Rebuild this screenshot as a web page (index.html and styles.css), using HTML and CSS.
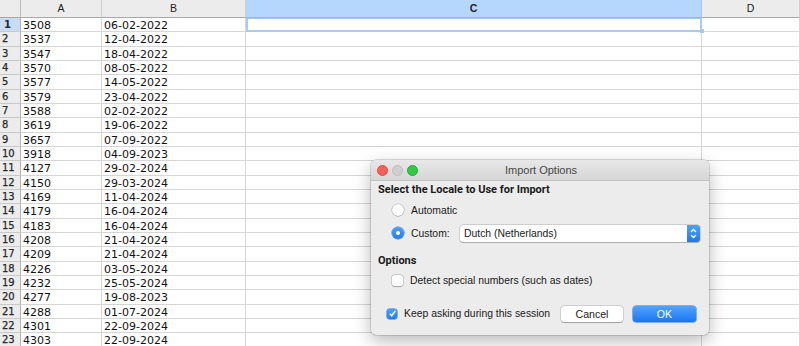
FILE: index.html
```html
<!DOCTYPE html>
<html>
<head>
<meta charset="utf-8">
<link rel="stylesheet" href="styles.css">
</head>
<body>
<div class="sheet">
  <div class="ch corner"></div>
  <div class="ch">A</div>
  <div class="ch">B</div>
  <div class="ch sel">C</div>
  <div class="ch">D</div>

  <div class="rh cur">1</div><div class="c">3508</div><div class="c">06-02-2022</div><div class="c active"><span class="handle"></span></div><div class="c"></div>
  <div class="rh">2</div><div class="c">3537</div><div class="c">12-04-2022</div><div class="c"></div><div class="c"></div>
  <div class="rh">3</div><div class="c">3547</div><div class="c">18-04-2022</div><div class="c"></div><div class="c"></div>
  <div class="rh">4</div><div class="c">3570</div><div class="c">08-05-2022</div><div class="c"></div><div class="c"></div>
  <div class="rh">5</div><div class="c">3577</div><div class="c">14-05-2022</div><div class="c"></div><div class="c"></div>
  <div class="rh">6</div><div class="c">3579</div><div class="c">23-04-2022</div><div class="c"></div><div class="c"></div>
  <div class="rh">7</div><div class="c">3588</div><div class="c">02-02-2022</div><div class="c"></div><div class="c"></div>
  <div class="rh">8</div><div class="c">3619</div><div class="c">19-06-2022</div><div class="c"></div><div class="c"></div>
  <div class="rh">9</div><div class="c">3657</div><div class="c">07-09-2022</div><div class="c"></div><div class="c"></div>
  <div class="rh">10</div><div class="c">3918</div><div class="c">04-09-2023</div><div class="c"></div><div class="c"></div>
  <div class="rh">11</div><div class="c">4127</div><div class="c">29-02-2024</div><div class="c"></div><div class="c"></div>
  <div class="rh">12</div><div class="c">4150</div><div class="c">29-03-2024</div><div class="c"></div><div class="c"></div>
  <div class="rh">13</div><div class="c">4169</div><div class="c">11-04-2024</div><div class="c"></div><div class="c"></div>
  <div class="rh">14</div><div class="c">4179</div><div class="c">16-04-2024</div><div class="c"></div><div class="c"></div>
  <div class="rh">15</div><div class="c">4183</div><div class="c">16-04-2024</div><div class="c"></div><div class="c"></div>
  <div class="rh">16</div><div class="c">4208</div><div class="c">21-04-2024</div><div class="c"></div><div class="c"></div>
  <div class="rh">17</div><div class="c">4209</div><div class="c">21-04-2024</div><div class="c"></div><div class="c"></div>
  <div class="rh">18</div><div class="c">4226</div><div class="c">03-05-2024</div><div class="c"></div><div class="c"></div>
  <div class="rh">19</div><div class="c">4232</div><div class="c">25-05-2024</div><div class="c"></div><div class="c"></div>
  <div class="rh">20</div><div class="c">4277</div><div class="c">19-08-2023</div><div class="c"></div><div class="c"></div>
  <div class="rh">21</div><div class="c">4288</div><div class="c">01-07-2024</div><div class="c"></div><div class="c"></div>
  <div class="rh">22</div><div class="c">4301</div><div class="c">22-09-2024</div><div class="c"></div><div class="c"></div>
  <div class="rh">23</div><div class="c">4303</div><div class="c">22-09-2024</div><div class="c"></div><div class="c"></div>
</div>

<div class="dialog">
  <div class="titlebar">
    <div class="lights">
      <span class="light red"></span>
      <span class="light gray"></span>
      <span class="light green"></span>
    </div>
    <div class="title">Import Options</div>
  </div>
  <div class="body">
    <div class="heading">Select the Locale to Use for Import</div>
    <div class="opt">
      <span class="radio"></span>
      <span class="label">Automatic</span>
    </div>
    <div class="opt custom">
      <span class="radio on"></span>
      <span class="label lw">Custom:</span>
      <div class="select">
        <span class="val">Dutch (Netherlands)</span>
        <span class="stepper">
          <svg width="7" height="11" viewBox="0 0 7 11"><path d="M1 4 L3.5 1.5 L6 4 M1 7 L3.5 9.5 L6 7" fill="none" stroke="#fff" stroke-width="1.3"/></svg>
        </span>
      </div>
    </div>
    <div class="heading h2">Options</div>
    <div class="opt chk">
      <span class="box"></span>
      <span class="label">Detect special numbers (such as dates)</span>
    </div>
    <div class="footer">
      <span class="box on">
        <svg width="9" height="9" viewBox="0 0 9 9"><path d="M1.8 4.8 L3.7 6.8 L7.3 2" fill="none" stroke="#fff" stroke-width="1.5"/></svg>
      </span>
      <span class="label keep">Keep asking during this session</span>
      <button class="btn">Cancel</button>
      <button class="btn ok">OK</button>
    </div>
  </div>
</div>
</body>
</html>
```

FILE: styles.css
```css
html, body {
  margin: 0;
  padding: 0;
  background: #fff;
  overflow: hidden;
  width: 800px;
  height: 346px;
}

.sheet {
  display: grid;
  grid-template-columns: 21px 81px 144px 456px 98px;
  grid-template-rows: 18px repeat(23, 14.33px);
  width: 800px;
}

.ch {
  background: #ececec;
  border-right: 1px solid #cfcfcf;
  border-bottom: 1px solid #a8a8a8;
  font-family: "Liberation Sans", Arial, sans-serif;
  font-size: 10.5px;
  color: #222;
  text-align: center;
  line-height: 17px;
  box-sizing: border-box;
}
.ch.corner { border-right: 1px solid #bcbcbc; }
.ch.sel {
  background: #b5d6fd;
  border-right: 1px solid #a3c8f5;
  border-bottom: 1px solid #8fb6e6;
  font-weight: bold;
}
.ch:last-child {
  text-align: right;
  padding-right: 6px;
}

.rh {
  background: #ececec;
  border-right: 1px solid #b5b5b5;
  border-bottom: 1px solid #c9c9c9;
  box-sizing: border-box;
  font-family: "DejaVu Sans", Verdana, sans-serif;
  font-size: 10px;
  color: #2a2a2a;
  padding-left: 2px;
  line-height: 13px;
  -webkit-text-stroke: 0.25px #2a2a2a;
}
.rh.cur {
  background: #c9dcf3;
  font-weight: bold;
  color: #1d2a4a;
  padding-left: 4px;
  -webkit-text-stroke: 0;
}

.c {
  border-right: 1px solid #d6d6d6;
  border-bottom: 1px solid #d6d6d6;
  box-sizing: border-box;
  font-family: "DejaVu Sans", Verdana, sans-serif;
  font-size: 11px;
  color: #111;
  padding-left: 2px;
  line-height: 15px;
  white-space: nowrap;
  overflow: hidden;
}
.c.active {
  position: relative;
  overflow: visible;
  border: 2px solid #a6cbf7;
  border-top: 1px solid #a6cbf7;
  border-right: 2px solid #a6cbf7;
}
.handle {
  position: absolute;
  right: -4px;
  bottom: -3px;
  width: 4px;
  height: 4px;
  background: #a6cbf7;
}

/* dialog */
.dialog {
  position: absolute;
  left: 371px;
  top: 160px;
  width: 338px;
  height: 175px;
  background: #ececec;
  border-radius: 5px;
  box-shadow: 0 0 0 0.5px rgba(0,0,0,0.25), 0 6px 18px rgba(0,0,0,0.28);
  font-family: "Liberation Sans", Arial, sans-serif;
  font-size: 10.4px;
  color: #1a1a1a;
  overflow: hidden;
}
.titlebar {
  height: 21px;
  background: linear-gradient(#e8e8e8, #d6d6d6);
  border-bottom: 1px solid #c2c2c2;
  box-sizing: border-box;
  position: relative;
  display: flex;
  align-items: center;
  justify-content: center;
}
.lights {
  position: absolute;
  left: 6px;
  top: 5px;
  display: flex;
  gap: 4px;
}
.light {
  width: 11px;
  height: 11px;
  border-radius: 50%;
  box-sizing: border-box;
}
.light.red { background: #fc605b; border: 0.5px solid #de4a44; }
.light.gray { background: #cfcfcf; border: 0.5px solid #bdbdbd; }
.light.green { background: #34c84a; border: 0.5px solid #27a43a; }
.title {
  font-size: 11px;
  color: #474747;
  padding-left: 2px;
}

.body {
  padding: 0 8px 0 7px;
}
.heading {
  font-family: Roboto, "Liberation Sans", Arial, sans-serif;
  font-weight: bold;
  font-size: 11px;
  margin-top: 2px;
  height: 14px;
  line-height: 14px;
  white-space: nowrap;
}
.heading.h2 { margin-top: 13px; }

.opt {
  display: flex;
  align-items: center;
  height: 16px;
  margin-top: 5px;
  padding-left: 14px;
  white-space: nowrap;
}
.opt.custom { margin-top: 7px; }
.opt.chk { margin-top: 4px; }

.radio {
  width: 12px;
  height: 12px;
  border-radius: 50%;
  background: #fff;
  box-shadow: 0 0 0 0.5px rgba(0,0,0,0.25), 0 0.5px 1px rgba(0,0,0,0.2);
  box-sizing: border-box;
  margin-right: 7px;
  position: relative;
}
.radio.on {
  background: linear-gradient(#4aa0fb, #1f7cf5);
  box-shadow: 0 0 0 0.5px #1b6fe0;
}
.radio.on::after {
  content: "";
  position: absolute;
  left: 4px;
  top: 4px;
  width: 4px;
  height: 4px;
  border-radius: 50%;
  background: #fff;
}
.label { color: #1a1a1a; white-space: nowrap; }
.lw { width: 48px; }

.select {
  flex: 1;
  height: 17px;
  background: #fff;
  border-radius: 3px;
  box-shadow: 0 0 0 0.5px rgba(0,0,0,0.22), 0 0.5px 1px rgba(0,0,0,0.18);
  display: flex;
  align-items: center;
  justify-content: space-between;
  margin-left: 1px;
  margin-right: 1px;
  overflow: hidden;
}
.val { padding-left: 4px; }
.stepper {
  width: 13px;
  height: 17px;
  background: linear-gradient(#4ea2fb, #1c79f4);
  display: flex;
  align-items: center;
  justify-content: center;
}

.box {
  width: 11px;
  height: 11px;
  border-radius: 2.5px;
  background: #fff;
  box-shadow: 0 0 0 0.5px rgba(0,0,0,0.25), 0 0.5px 1px rgba(0,0,0,0.2);
  margin-right: 7px;
  display: flex;
  align-items: center;
  justify-content: center;
}
.box.on {
  width: 10px;
  height: 10px;
  background: linear-gradient(#4aa0fb, #1f7cf5);
  box-shadow: 0 0 0 0.5px #1b6fe0;
}

.footer {
  display: flex;
  align-items: center;
  margin-top: 17px;
  padding-left: 9px;
  height: 17px;
}
.keep { flex: 1; }
.btn {
  font-family: "Liberation Sans", Arial, sans-serif;
  font-size: 10.6px;
  height: 16px;
  border: none;
  border-radius: 3px;
  padding: 0;
  width: 62px;
  background: #fff;
  color: #1a1a1a;
  box-shadow: 0 0 0 0.5px rgba(0,0,0,0.2), 0 0.5px 1px rgba(0,0,0,0.25);
  margin-left: 9px;
}
.btn.ok {
  width: 63px;
  color: #fff;
  background: linear-gradient(#52a3fb, #1a76f3);
  box-shadow: 0 0 0 0.5px #1c6fe0;
  margin-left: 10px;
  margin-right: 5px;
}
```
